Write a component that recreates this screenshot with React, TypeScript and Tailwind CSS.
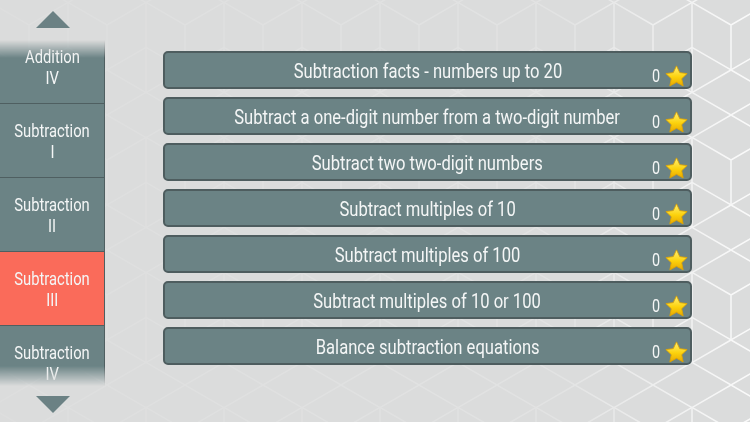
import React from 'react';

const lessons = [
  'Subtraction facts - numbers up to 20',
  'Subtract a one-digit number from a two-digit number',
  'Subtract two two-digit numbers',
  'Subtract multiples of 10',
  'Subtract multiples of 100',
  'Subtract multiples of 10 or 100',
  'Balance subtraction equations',
];

const levels = [
  { top: 'Addition', bottom: 'IV' },
  { top: 'Subtraction', bottom: 'I' },
  { top: 'Subtraction', bottom: 'II' },
  { top: 'Subtraction', bottom: 'III', active: true },
  { top: 'Subtraction', bottom: 'IV' },
];

const font = { fontFamily: 'Roboto, "DejaVu Sans", sans-serif' };

function Star() {
  return (
    <svg width="25" height="25" viewBox="0 0 24 24">
      <defs>
        <linearGradient id="starFill" x1="0" y1="0" x2="0" y2="1">
          <stop offset="0%" stopColor="#fff27a" />
          <stop offset="55%" stopColor="#fcd20c" />
          <stop offset="100%" stopColor="#e8a800" />
        </linearGradient>
      </defs>
      <path
        d="M12 1.8l3.1 6.5 7.1.9-5.2 4.9 1.4 7-6.4-3.5-6.4 3.5 1.4-7L1.8 9.2l7.1-.9z"
        fill="url(#starFill)"
        stroke="#e0a400"
        strokeWidth="0.8"
        strokeLinejoin="round"
      />
    </svg>
  );
}

function HexBackground() {
  return (
    <svg className="absolute inset-0 w-full h-full" width="750" height="422">
      <defs>
        <pattern id="hex" width="78" height="135" patternUnits="userSpaceOnUse" x="-10" y="-20">
          <g fill="none" stroke="#ffffff" strokeWidth="1.5">
            <path d="M39 0 L78 22.5 L78 67.5 L39 90 L0 67.5 L0 22.5 Z" />
            <path d="M39 45 L39 90 M39 45 L0 22.5 M39 45 L78 22.5" />
            <path d="M0 67.5 L0 112.5 L39 135 M78 67.5 L78 112.5 L39 135 M0 112.5 L39 90 M78 112.5 L39 90" />
          </g>
        </pattern>
        <linearGradient id="fade" x1="0" y1="0" x2="1" y2="0">
          <stop offset="0%" stopColor="#fff" stopOpacity="0.08" />
          <stop offset="75%" stopColor="#fff" stopOpacity="0.2" />
          <stop offset="100%" stopColor="#fff" stopOpacity="0.85" />
        </linearGradient>
        <mask id="m">
          <rect width="750" height="422" fill="url(#fade)" />
        </mask>
      </defs>
      <rect width="750" height="422" fill="url(#hex)" mask="url(#m)" />
    </svg>
  );
}

export default function App() {
  return (
    <div className="relative w-[750px] h-[422px] overflow-hidden bg-[#dbdcdc]" style={font}>
      <HexBackground />
      <div className="relative flex h-full">
        {/* Sidebar */}
        <div className="w-[105px] flex flex-col items-center">
          <div className="h-[40px] flex items-center justify-center">
            <div className="w-0 h-0 border-l-[17px] border-r-[17px] border-b-[17px] border-l-transparent border-r-transparent border-b-[#6b8184] mt-[-2px]" />
          </div>
          <div
            className="w-full h-[346px] overflow-hidden"
            style={{
              WebkitMaskImage: 'linear-gradient(to bottom, transparent 0px, black 18px, black 326px, transparent 346px)',
              maskImage: 'linear-gradient(to bottom, transparent 0px, black 18px, black 326px, transparent 346px)',
            }}
          >
            <div className="mt-[-10px] flex flex-col">
              {levels.map((l, i) => (
                <div
                  key={i}
                  className={`h-[74px] flex flex-col items-center justify-center border-r border-b border-[#4f5f61] text-[#f4f6f6] text-[18px] leading-[21px] ${
                    l.active ? 'bg-[#fa6b5a]' : 'bg-[#6b8385]'
                  }`}
                >
                  <span className="inline-block scale-x-[0.82]">{l.top}</span>
                  <span className="inline-block scale-x-[0.82]">{l.bottom}</span>
                </div>
              ))}
            </div>
          </div>
          <div className="flex-1 flex items-center justify-center">
            <div className="w-0 h-0 border-l-[17px] border-r-[17px] border-t-[17px] border-l-transparent border-r-transparent border-t-[#6b8184]" />
          </div>
        </div>

        {/* Lessons */}
        <div className="flex-1 pl-[58px] pr-[58px] pt-[51px] flex flex-col gap-[8px]">
          {lessons.map((t) => (
            <div
              key={t}
              className="relative h-[38px] rounded-[5px] border-2 border-[#4e5d5f] bg-[#6b8385] flex items-center justify-center text-[#f4f6f6] text-[21px]"
            >
              <span className="inline-block scale-x-[0.79] whitespace-nowrap mt-[3px]">{t}</span>
              <div className="absolute right-[1px] bottom-[-2px] flex items-end gap-[3px]">
                <span className="inline-block scale-x-[0.8] text-[18px] leading-none mb-[4px]">0</span>
                <Star />
              </div>
            </div>
          ))}
        </div>
      </div>
    </div>
  );
}
